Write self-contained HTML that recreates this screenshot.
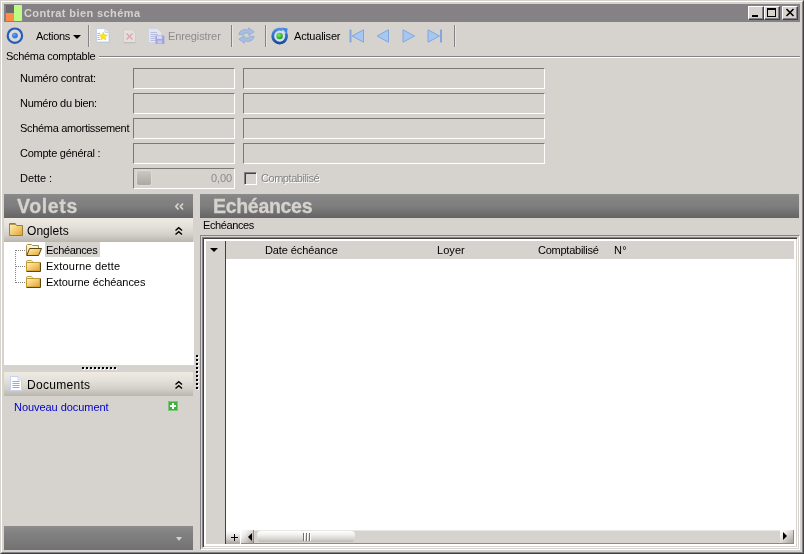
<!DOCTYPE html>
<html><head><meta charset="utf-8">
<style>
*{box-sizing:border-box;margin:0;padding:0}
html,body{width:804px;height:554px;overflow:hidden;background:#d6d3ce}
body{font-family:"Liberation Sans",sans-serif;font-size:11px;color:#000;position:relative}
.abs{position:absolute}
svg{position:absolute;overflow:visible}
#win{position:absolute;left:0;top:0;width:804px;height:554px;background:#d6d3ce;
 border-top:1px solid #d6d3ce;border-left:1px solid #d6d3ce;border-right:1px solid #424142;border-bottom:1px solid #424142}
#win2{position:absolute;left:1px;top:1px;width:802px;height:552px;border-top:1px solid #fff;border-left:1px solid #fff;border-right:1px solid #848284;border-bottom:1px solid #848284}
#title{position:absolute;left:4px;top:4px;width:796px;height:18px;background:#848284}
.tb{position:absolute;top:6px;width:16px;height:14px;background:#d6d3ce;border-top:1px solid #fff;border-left:1px solid #fff;border-right:1px solid #424142;border-bottom:1px solid #424142;box-shadow:inset -1px -1px 0 #848284}
.lbl{position:absolute;white-space:nowrap;line-height:14px}
.inp{position:absolute;height:21px;background:#d6d3ce;border-top:1px solid #7b7973;border-left:1px solid #7b7973;border-right:1px solid #fff;border-bottom:1px solid #fff}
.sep{position:absolute;top:25px;width:2px;height:22px;border-left:1px solid #848284;border-right:1px solid #e7e3de}
.hdr{position:absolute;height:24px;background:linear-gradient(#8c8c8c 0%,#858585 12%,#7e7e7e 50%,#646464 100%)}
.sub{position:absolute;height:24px;background:linear-gradient(#efebe3 0%,#e4e1da 35%,#d3d0c9 70%,#bab6ae 100%)}
.big{position:absolute;font-size:19.5px;font-weight:bold;color:#d6d3ce;-webkit-text-stroke:.3px #d6d3ce;line-height:22px;white-space:nowrap}
.dot{position:absolute;width:2px;height:2px;background:#000;box-shadow:1px 1px 0 #fff}
</style></head><body><div style="position:absolute;left:0;top:0;width:804px;height:554px;will-change:transform">
<div id="win"></div><div id="win2"></div>
<div id="title">
 <div class="abs" style="left:2px;top:1px;width:8px;height:8px;background:#6b696b"></div>
 <div class="abs" style="left:2px;top:9px;width:8px;height:8px;background:#ff8a4a"></div>
 <div class="abs" style="left:10px;top:1px;width:8px;height:16px;background:#bdfb84"></div>
</div>
<div class="lbl" style="left:24px;top:6px;font-weight:bold;color:#d6d3ce;letter-spacing:.4px">Contrat bien schéma</div>
<div class="tb" style="left:748px"><div class="abs" style="left:3px;top:8px;width:6px;height:2px;background:#000"></div></div>
<div class="tb" style="left:764px"><div class="abs" style="left:2px;top:1px;width:9px;height:9px;border:1px solid #000;border-top-width:2px"></div></div>
<div class="tb" style="left:782px"><svg style="left:3px;top:2px" width="8" height="7" viewBox="0 0 8 7"><path d="M0.5 0 L7.5 7 M7.5 0 L0.5 7" stroke="#000" stroke-width="1.6" fill="none"/></svg></div>

<!-- toolbar -->
<svg style="left:6px;top:26px" width="18" height="18" viewBox="0 0 18 18"><circle cx="8.9" cy="9.7" r="7.2" fill="#d9dadd" stroke="#2c5bb5" stroke-width="2.2"/><circle cx="9" cy="9.6" r="2.9" fill="#3b7ce0"/><circle cx="8.4" cy="8.8" r="1.2" fill="#6ba2f0"/></svg>
<div class="lbl" style="left:36px;top:29px;letter-spacing:-.3px">Actions</div>
<div class="abs" style="left:73px;top:35px;width:0;height:0;border-left:4px solid transparent;border-right:4px solid transparent;border-top:4px solid #000"></div>
<div class="sep" style="left:88px"></div>
<div class="sep" style="left:231px"></div>
<div class="sep" style="left:265px"></div>
<div class="sep" style="left:454px"></div>
<div class="lbl" style="left:168px;top:29px;color:#8c8a8c;letter-spacing:-.1px">Enregistrer</div>
<div class="lbl" style="left:294px;top:29px;letter-spacing:-.2px">Actualiser</div>
<!-- new doc -->
<svg style="left:96px;top:28px" width="14" height="15" viewBox="0 0 14 15"><path d="M1 1 H9.5 L13.5 5 V14.5 H1 Z" fill="#a5aece" opacity=".7"/><path d="M0.5 0.5 H9 L13 4.5 V14 H0.5 Z" fill="#fff" stroke="#c6d0e7"/><path d="M9 0.5 V4.5 H13" fill="#e7ebf7" stroke="#c6d0e7"/><path d="M1.5 5.5H4M1.5 7.5H3.5M1.5 9.5H3.5M1.5 11.5H4" stroke="#9cb2e7"/><path d="M7.3 3.9 L8.5 6.7 L11.6 7.0 L9.3 9.0 L9.9 12.0 L7.3 10.5 L4.7 12.0 L5.3 9.0 L3.0 7.0 L6.1 6.7 Z" fill="#f5e614" stroke="#e4cc30" stroke-width=".5"/></svg>
<!-- delete disabled -->
<svg style="left:123px;top:29px" width="13" height="14" viewBox="0 0 13 14"><path d="M0.5 0.5 H9 L12.5 4 V13.5 H0.5 Z" fill="#e2dfdc" stroke="#d0cdc8"/><path d="M0.5 13.8 H12.5" stroke="#bdbab5"/><path d="M3.5 4.5 L9.5 10.5 M9.5 4.5 L3.5 10.5" stroke="#e79cb0" stroke-width="1.3"/></svg>
<!-- save disabled -->
<svg style="left:148px;top:28px" width="17" height="16" viewBox="0 0 17 16"><path d="M0.5 0.5 H9.5 L13.5 4.5 V14.5 H0.5 Z" fill="#e4e6ee" stroke="#d0d3de"/><path d="M2.5 4.5H9M2.5 6.5H10M2.5 8.5H10M2.5 10.5H8M2.5 12.5H8" stroke="#b5bedc"/><rect x="7.5" y="7.5" width="9" height="8.5" fill="#a5a5de"/><rect x="9" y="8" width="5" height="3" fill="#d6d8f3"/><rect x="9.5" y="12.5" width="4.5" height="3" fill="#c6c8ee"/></svg>
<!-- refresh disabled -->
<svg style="left:238px;top:27px" width="17" height="17" viewBox="0 0 17 17"><path d="M0.8 7.6 C1.4 3.6 5.8 1.6 10.4 3 L10.6 0.8 L16.2 4.8 L10.8 8.4 L10.8 6.4 C8.4 5.6 6 6 5.2 7.8 Z" fill="#a5bee3" stroke="#8fa6cf" stroke-width=".7"/><path d="M16.2 9.4 C15.6 13.4 11.2 15.4 6.6 14 L6.4 16.2 L0.8 12.2 L6.2 8.6 L6.2 10.6 C8.6 11.4 11 11 11.8 9.2 Z" fill="#a5bee3" stroke="#8fa6cf" stroke-width=".7"/></svg>
<!-- actualiser -->
<svg style="left:271px;top:27px" width="18" height="18" viewBox="0 0 18 18"><defs><linearGradient id="gA" x1="0" y1="0" x2="0" y2="1"><stop offset="0" stop-color="#4a8ee7"/><stop offset="1" stop-color="#1b4a9c"/></linearGradient><radialGradient id="gB" cx=".4" cy=".35" r=".7"><stop offset="0" stop-color="#7bea6b"/><stop offset="1" stop-color="#189a18"/></radialGradient></defs><circle cx="8.8" cy="9.2" r="5.8" fill="#d3e1f3"/><path d="M14.9 6.2 A6.9 6.9 0 1 1 11.6 2.9" fill="none" stroke="url(#gA)" stroke-width="2.7"/><path d="M10.6 0.6 L16.6 1.4 L15.8 7.2 Z" fill="#3f86e0"/><circle cx="8.6" cy="9" r="3.2" fill="url(#gB)"/></svg>
<!-- nav -->
<svg style="left:349px;top:29px" width="94" height="14" viewBox="0 0 94 14"><g fill="#a5c7f0" stroke="#84a6de" stroke-width="1" stroke-linejoin="round"><path d="M3 7 L14.5 0.8 V13.2 Z"/><rect x="0.5" y="0.5" width="2" height="13" fill="#84a6de" stroke="none"/><path d="M28 7 L39.5 0.8 V13.2 Z"/><path d="M65.5 7 L54 0.8 V13.2 Z"/><path d="M90.5 7 L79 0.8 V13.2 Z"/><rect x="91" y="0.5" width="2" height="13" fill="#84a6de" stroke="none"/></g></svg>

<!-- group -->
<div class="abs" style="left:99px;top:56px;width:701px;height:2px;border-top:1px solid #848284;border-bottom:1px solid #fff"></div>
<div class="lbl" style="left:6px;top:49px;letter-spacing:-.3px">Schéma comptable</div>
<div class="lbl" style="left:20px;top:71px;letter-spacing:-.2px">Numéro contrat:</div>
<div class="lbl" style="left:20px;top:96px;letter-spacing:-.3px">Numéro du bien:</div>
<div class="lbl" style="left:20px;top:121px;letter-spacing:-.32px">Schéma amortissement</div>
<div class="lbl" style="left:20px;top:146px;letter-spacing:-.25px">Compte général :</div>
<div class="lbl" style="left:20px;top:171px;letter-spacing:-.05px">Dette :</div>
<div class="inp" style="left:133px;top:68px;width:102px"></div><div class="inp" style="left:243px;top:68px;width:302px"></div>
<div class="inp" style="left:133px;top:93px;width:102px"></div><div class="inp" style="left:243px;top:93px;width:302px"></div>
<div class="inp" style="left:133px;top:118px;width:102px"></div><div class="inp" style="left:243px;top:118px;width:302px"></div>
<div class="inp" style="left:133px;top:143px;width:102px"></div><div class="inp" style="left:243px;top:143px;width:302px"></div>
<div class="inp" style="left:133px;top:168px;width:102px"></div>
<div class="abs" style="left:136px;top:170px;width:16px;height:16px;border:1px solid #dedbd6;border-radius:3px;background:linear-gradient(#cac7c2,#aba8a3)"></div>
<div class="lbl" style="left:211px;top:171px;color:#8c8a8c;letter-spacing:-.1px">0,00</div>
<div class="abs" style="left:244px;top:172px;width:13px;height:13px;background:#d6d3ce;border-top:1px solid #848284;border-left:1px solid #848284;border-right:1px solid #fff;border-bottom:1px solid #fff;box-shadow:inset 1px 1px 0 #424142"></div>
<div class="lbl" style="left:261px;top:171px;color:#848284;letter-spacing:-.45px;text-shadow:1px 1px 0 #fff">Comptabilisé</div>

<!-- left panel -->
<div class="hdr" style="left:4px;top:194px;width:189px"></div>
<div class="big" style="left:17px;top:195px;letter-spacing:.65px">Volets</div>
<svg style="left:175px;top:203px" width="9" height="8" viewBox="0 0 9 8"><path d="M3.5 0.5 L0.8 3.5 L3.5 6.5 M8 0.5 L5.3 3.5 L8 6.5" fill="none" stroke="#d6d3ce" stroke-width="1.7"/></svg>
<div class="sub" style="left:4px;top:218px;width:189px"></div>
<svg style="left:9px;top:223px" width="14" height="13" viewBox="0 0 14 13"><defs><linearGradient id="gF" x1="0" y1="0" x2="1" y2="1"><stop offset="0" stop-color="#fff3c0"/><stop offset="1" stop-color="#e3a325"/></linearGradient></defs><path d="M0.5 1 H6.5 L7.5 2.5 H13.5 V12.5 H0.5 Z" fill="url(#gF)" stroke="#9c7d39"/><path d="M0.5 0.8 H6.5" stroke="#7b5d21"/></svg>
<div class="lbl" style="left:27px;top:224px;font-size:12px;letter-spacing:.05px">Onglets</div>
<svg style="left:175px;top:227px" width="8" height="8" viewBox="0 0 8 8"><path d="M0.5 3.6 L3.75 0.7 L7 3.6 M0.5 7.6 L3.75 4.7 L7 7.6" fill="none" stroke="#000" stroke-width="1.4"/></svg>
<div class="abs" style="left:4px;top:242px;width:190px;height:123px;background:#fff"></div>
<div class="abs" style="left:45px;top:242px;width:55px;height:15px;background:#d6d3ce"></div>
<div class="lbl" style="left:46px;top:243px;letter-spacing:-.35px">Echéances</div>
<div class="lbl" style="left:46px;top:259px;letter-spacing:.2px">Extourne dette</div>
<div class="lbl" style="left:46px;top:275px;letter-spacing:-.05px">Extourne échéances</div>
<!-- tree lines -->
<svg style="left:15px;top:250px" width="12" height="34" viewBox="0 0 12 34"><path d="M0.5 0 V33 M1 0.5 H11 M1 16.5 H11 M1 32.5 H11" stroke="#848284" stroke-dasharray="1 1" fill="none"/></svg>
<!-- open folder -->
<svg style="left:26px;top:244px" width="16" height="12" viewBox="0 0 16 12"><path d="M0.5 11.5 V1.5 L1.5 0.5 H5.5 L6.5 1.5 H12.5 V4" fill="#fdf3c4" stroke="#a58e4a"/><path d="M0.8 11.5 L3.5 4.5 H15.5 L12.5 11.5 Z" fill="url(#gF)" stroke="#5a4910"/></svg>
<!-- closed folders -->
<svg style="left:26px;top:260px" width="15" height="12" viewBox="0 0 15 12"><path d="M0.5 2.5 V1 L1.2 0.5 H5.5 L7 2.5" fill="#fdf3c4" stroke="#bda65a"/><path d="M0.5 2.5 H14 V11 H0.5 Z" fill="url(#gF)" stroke="#c69a29"/><path d="M0.5 11.5 H14.5 V2.5" fill="none" stroke="#5a4910"/></svg>
<svg style="left:26px;top:276px" width="15" height="12" viewBox="0 0 15 12"><path d="M0.5 2.5 V1 L1.2 0.5 H5.5 L7 2.5" fill="#fdf3c4" stroke="#bda65a"/><path d="M0.5 2.5 H14 V11 H0.5 Z" fill="url(#gF)" stroke="#c69a29"/><path d="M0.5 11.5 H14.5 V2.5" fill="none" stroke="#5a4910"/></svg>
<!-- h splitter dots -->
<div class="dot" style="left:82px;top:367px"></div><div class="dot" style="left:86px;top:367px"></div><div class="dot" style="left:90px;top:367px"></div><div class="dot" style="left:94px;top:367px"></div><div class="dot" style="left:98px;top:367px"></div><div class="dot" style="left:102px;top:367px"></div><div class="dot" style="left:106px;top:367px"></div><div class="dot" style="left:110px;top:367px"></div><div class="dot" style="left:114px;top:367px"></div>
<div class="sub" style="left:4px;top:372px;width:189px"></div>
<svg style="left:10px;top:376px" width="12" height="15" viewBox="0 0 12 15"><path d="M0.5 0.5 H8 L11.5 4 V14.5 H0.5 Z" fill="#fff" stroke="#c6d3ef"/><path d="M8 0.5 V4 H11.5" fill="#eff3fb" stroke="#c6d3ef"/><path d="M2.5 5.5H9.5M2.5 7.5H9.5M2.5 9.5H9.5M2.5 11.5H9.5" stroke="#8caaf0"/></svg>
<div class="lbl" style="left:27px;top:378px;font-size:12px;letter-spacing:.3px">Documents</div>
<svg style="left:175px;top:381px" width="8" height="8" viewBox="0 0 8 8"><path d="M0.5 3.6 L3.75 0.7 L7 3.6 M0.5 7.6 L3.75 4.7 L7 7.6" fill="none" stroke="#000" stroke-width="1.4"/></svg>
<div class="lbl" style="left:14px;top:400px;color:#0000c6;letter-spacing:-.05px">Nouveau document</div>
<div class="abs" style="left:168px;top:401px;width:10px;height:10px;background:#39b239;border:1px solid #7bc77b"></div>
<div class="abs" style="left:172px;top:403px;width:2px;height:6px;background:#fff"></div>
<div class="abs" style="left:170px;top:405px;width:6px;height:2px;background:#fff"></div>
<div class="hdr" style="left:4px;top:526px;width:189px;background:linear-gradient(#8c8c8c 0%,#818181 30%,#7b7b7b 60%,#717171 100%)"></div>
<div class="abs" style="left:176px;top:537px;width:0;height:0;border-left:3.5px solid transparent;border-right:3.5px solid transparent;border-top:4px solid #d6d3ce"></div>
<div class="dot" style="left:196px;top:355px"></div><div class="dot" style="left:196px;top:359px"></div><div class="dot" style="left:196px;top:363px"></div><div class="dot" style="left:196px;top:367px"></div><div class="dot" style="left:196px;top:371px"></div><div class="dot" style="left:196px;top:375px"></div><div class="dot" style="left:196px;top:379px"></div><div class="dot" style="left:196px;top:383px"></div><div class="dot" style="left:196px;top:387px"></div>

<!-- right panel -->
<div class="hdr" style="left:200px;top:194px;width:599px"></div>
<div class="big" style="left:213px;top:195px;letter-spacing:-.3px">Echéances</div>
<div class="lbl" style="left:203px;top:218px;letter-spacing:-.4px">Echéances</div>
<div class="abs" style="left:200px;top:235px;width:600px;height:315px;border-top:1px solid #848284;border-left:1px solid #848284;border-right:1px solid #fff;border-bottom:1px solid #fff"></div>
<div class="abs" style="left:202px;top:237px;width:596px;height:311px;background:#fff;border-top:1px solid #848284;border-left:1px solid #848284;border-right:1px solid #fff;border-bottom:1px solid #fff;box-shadow:inset 1px 1px 0 #424142,inset -1px -1px 0 #d6d3ce"></div>
<div class="abs" style="left:206px;top:241px;width:19px;height:303px;background:#d6d3ce"></div>
<div class="abs" style="left:225px;top:241px;width:1px;height:303px;background:#424142"></div>
<div class="abs" style="left:226px;top:241px;width:568px;height:18px;background:#d6d3ce"></div>
<div class="abs" style="left:210px;top:248px;width:0;height:0;border-left:4px solid transparent;border-right:4px solid transparent;border-top:4px solid #000"></div>
<div class="lbl" style="left:265px;top:243px;letter-spacing:-.1px">Date échéance</div>
<div class="lbl" style="left:437px;top:243px;letter-spacing:.05px">Loyer</div>
<div class="lbl" style="left:538px;top:243px;letter-spacing:-.25px">Comptabilisé</div>
<div class="lbl" style="left:614px;top:243px;letter-spacing:.25px">N°</div>
<!-- scrollbar -->
<div class="abs" style="left:254px;top:530px;width:540px;height:14px;background:#d6d3ce;border-top:1px solid #e7e7e3;border-bottom:1px solid #8c8a84"></div>
<div class="abs" style="left:226px;top:530px;width:14px;height:14px;background:linear-gradient(#fff 0%,#f3f2f0 25%,#d6d3ce 60%,#a5a29c 100%)"></div>
<div class="abs" style="left:231px;top:537px;width:7px;height:1px;background:#000"></div>
<div class="abs" style="left:234px;top:534px;width:1px;height:7px;background:#000"></div>
<div class="abs" style="left:241px;top:530px;width:13px;height:14px;background:linear-gradient(135deg,#fff 0%,#efeeeb 30%,#d6d3ce 55%,#a5a29c 100%);border-right:1px solid #8c8a84;border-bottom:1px solid #8c8a84"></div>
<div class="abs" style="left:247.5px;top:532.5px;width:0;height:0;border-top:4.5px solid transparent;border-bottom:4.5px solid transparent;border-right:4.5px solid #000"></div>
<div class="abs" style="left:780px;top:530px;width:14px;height:14px;background:linear-gradient(135deg,#fff 0%,#efeeeb 30%,#d6d3ce 55%,#a5a29c 100%);border-right:1px solid #8c8a84;border-bottom:1px solid #8c8a84"></div>
<div class="abs" style="left:783px;top:532px;width:0;height:0;border-top:4.5px solid transparent;border-bottom:4.5px solid transparent;border-left:4.5px solid #000"></div>
<div class="abs" style="left:257px;top:531px;width:98px;height:11px;border-radius:4px;background:linear-gradient(#fff 0%,#efefed 35%,#d9d7d2 70%,#bdbab5 100%)"></div>
<div class="abs" style="left:303px;top:533px;width:1px;height:8px;background:#73716b;box-shadow:1px 0 0 #fff,3px 0 0 #73716b,4px 0 0 #fff,6px 0 0 #73716b,7px 0 0 #fff"></div>
</div></body></html>
